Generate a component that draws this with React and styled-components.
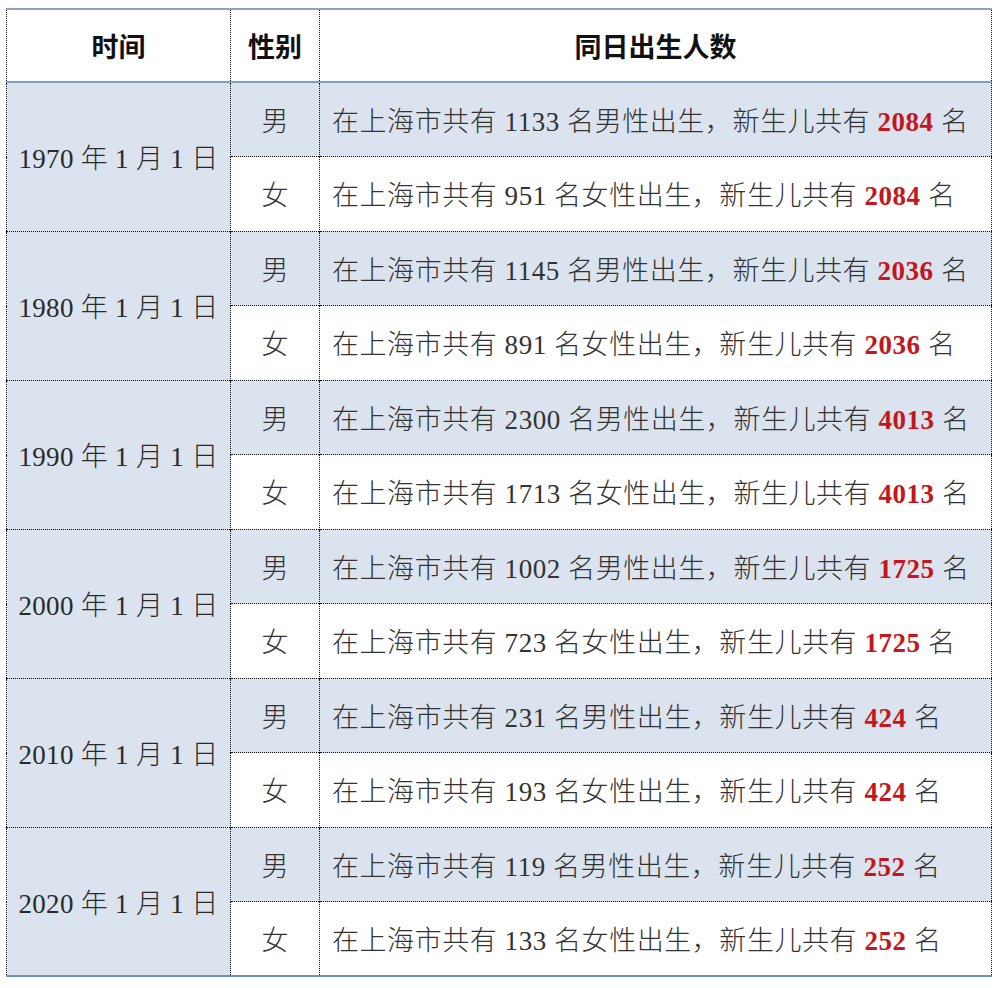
import React from "react";
import styled, { createGlobalStyle } from "styled-components";

const Global = createGlobalStyle`
  html, body { margin: 0; padding: 0; background: #fff; }
  body { font-family: "Liberation Serif", "Noto Sans CJK SC", serif; }
`;

const Page = styled.div`
  padding: 8px 8px 12px 6px;
  width: 1000px;
  box-sizing: border-box;
`;

const Table = styled.table`
  width: 986px;
  border-collapse: collapse;
  table-layout: fixed;
  border-left: 1px dotted #111;
  border-right: 1px dotted #111;
  border-top: 2px solid #8fa3bb;
  border-bottom: 2px solid #6f92c0;
  font-size: 27px;
  font-weight: 300;
  color: #333;
`;

const HeadRow = styled.tr`
  height: 73px;
`;

const Th = styled.th`
  font-weight: 700;
  color: #111;
  text-align: center;
  border-left: ${(p) => (p.$first ? "none" : "1px dotted #111")};
  border-bottom: 2px solid #7d9dc3;
  background: #fff;
  padding: 0;
`;

const Row = styled.tr`
  height: 74.5px;
`;

const DateCell = styled.td`
  background: #dbe3ef;
  text-align: center;
  border-top: 1px dotted #111;
  padding: 0;
  color: #2a2a2a;
  white-space: nowrap;
  letter-spacing: 0.3px;
`;

const SexCell = styled.td`
  background: ${(p) => (p.$shade ? "#dbe3ef" : "#fff")};
  text-align: center;
  border-left: 1px dotted #111;
  border-top: 1px dotted #111;
  padding: 0;
  color: #333;
`;

const TextCell = styled.td`
  background: ${(p) => (p.$shade ? "#dbe3ef" : "#fff")};
  text-align: left;
  border-left: 1px dotted #111;
  border-top: 1px dotted #111;
  padding: 0 0 0 12px;
  white-space: nowrap;
  color: #333;
  letter-spacing: 0.55px;
`;

const Red = styled.b`
  color: #c4161c;
  font-weight: 700;
`;

const data = [
  { year: 1970, m: 1133, f: 951, total: 2084 },
  { year: 1980, m: 1145, f: 891, total: 2036 },
  { year: 1990, m: 2300, f: 1713, total: 4013 },
  { year: 2000, m: 1002, f: 723, total: 1725 },
  { year: 2010, m: 231, f: 193, total: 424 },
  { year: 2020, m: 119, f: 133, total: 252 },
];

export default function App() {
  return (
    <Page>
      <Global />
      <Table>
        <colgroup>
          <col style={{ width: 224 }} />
          <col style={{ width: 89 }} />
          <col />
        </colgroup>
        <thead>
          <HeadRow>
            <Th $first>时间</Th>
            <Th>性别</Th>
            <Th>同日出生人数</Th>
          </HeadRow>
        </thead>
        <tbody>
          {data.map((d) => (
            <React.Fragment key={d.year}>
              <Row>
                <DateCell rowSpan={2}>{d.year} 年 1 月 1 日</DateCell>
                <SexCell $shade>男</SexCell>
                <TextCell $shade>
                  在上海市共有 {d.m} 名男性出生，新生儿共有 <Red>{d.total}</Red> 名
                </TextCell>
              </Row>
              <Row>
                <SexCell>女</SexCell>
                <TextCell>
                  在上海市共有 {d.f} 名女性出生，新生儿共有 <Red>{d.total}</Red> 名
                </TextCell>
              </Row>
            </React.Fragment>
          ))}
        </tbody>
      </Table>
    </Page>
  );
}
